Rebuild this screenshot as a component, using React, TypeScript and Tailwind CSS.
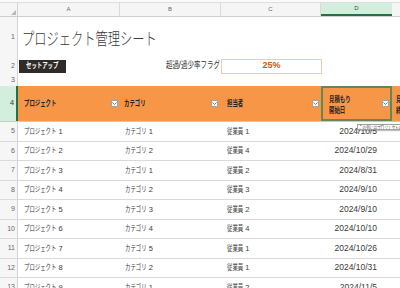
import React from "react";

const SX = 0.72;

// Meiryo UI style narrow kana: CJK runs are squeezed horizontally, latin runs left as is
function Jp({ text, size }: { text: string; size: number }) {
  const runs = text.match(/[\u2e80-\uffef]+|[^\u2e80-\uffef]+/g) ?? [];
  return (
    <span className="whitespace-nowrap">
      {runs.map((r, i) =>
        /[\u2e80-\uffef]/.test(r) ? (
          <span
            key={i}
            className="inline-block origin-left scale-x-[0.72]"
            style={{ marginRight: -(1 - SX) * r.length * size }}
          >
            {r}
          </span>
        ) : (
          <span key={i} className="whitespace-pre">
            {r}
          </span>
        )
      )}
    </span>
  );
}

const ROWS = [
  { n: 5, p: "プロジェクト 1", c: "カテゴリ 1", e: "従業員 1", d: "2024/10/5" },
  { n: 6, p: "プロジェクト 2", c: "カテゴリ 2", e: "従業員 4", d: "2024/10/29" },
  { n: 7, p: "プロジェクト 3", c: "カテゴリ 1", e: "従業員 2", d: "2024/8/31" },
  { n: 8, p: "プロジェクト 4", c: "カテゴリ 2", e: "従業員 3", d: "2024/9/10" },
  { n: 9, p: "プロジェクト 5", c: "カテゴリ 3", e: "従業員 2", d: "2024/9/10" },
  { n: 10, p: "プロジェクト 6", c: "カテゴリ 4", e: "従業員 4", d: "2024/10/10" },
  { n: 11, p: "プロジェクト 7", c: "カテゴリ 5", e: "従業員 1", d: "2024/10/26" },
  { n: 12, p: "プロジェクト 8", c: "カテゴリ 2", e: "従業員 1", d: "2024/10/31" },
  { n: 13, p: "プロジェクト 9", c: "カテゴリ 1", e: "従業員 2", d: "2024/11/5" },
];

function RowNum({ n, className = "" }: { n?: number; className?: string }) {
  return (
    <div
      className={
        "w-[18px] shrink-0 flex items-center justify-end pr-[2px] text-[7px] text-[#666] border-r " +
        (className || "bg-[#f6f6f6] border-[#d4d4d4]")
      }
    >
      {n}
    </div>
  );
}

function Filter() {
  return (
    <div className="w-[7px] h-[7px] shrink-0 bg-white border border-[#a3a3a3] flex items-center justify-center">
      <svg width="5" height="3" viewBox="0 0 5 3">
        <path d="M0.5 0.5 L2.5 2.5 L4.5 0.5" fill="none" stroke="#555" strokeWidth="0.8" />
      </svg>
    </div>
  );
}

export default function App() {
  return (
    <div className="relative w-[400px] h-[288px] overflow-hidden bg-white text-[#333] font-['Liberation_Sans','Noto_Sans_CJK_JP',sans-serif]">
      {/* top strip */}
      <div className="h-[3px] bg-[#fafafa] border-b border-[#dedede]" />

      {/* column letters */}
      <div className="flex h-[14px] bg-[#f5f5f5] border-b border-[#cfcfcf] text-[6px] text-[#666]">
        <div className="w-[18px] shrink-0 flex items-end justify-end pr-[1px] pb-[1px] border-r border-[#d4d4d4]">
          <svg width="5" height="5" viewBox="0 0 5 5">
            <path d="M5 0 L5 5 L0 5 Z" fill="#b9b9b9" />
          </svg>
        </div>
        <div className="w-[102px] shrink-0 flex items-center justify-center border-r border-[#dadada]">A</div>
        <div className="w-[101px] shrink-0 flex items-center justify-center border-r border-[#dadada]">B</div>
        <div className="w-[100px] shrink-0 flex items-center justify-center border-r border-[#dadada]">C</div>
        <div className="w-[71px] shrink-0 flex items-center justify-center bg-[#d3eedd] border-b-2 border-[#217346] text-[#185c37]">
          D
        </div>
        <div className="flex-1" />
      </div>

      {/* row 1: title */}
      <div className="flex h-[40px]">
        <RowNum n={1} />
        <div className="flex-1 pl-[4px] pt-[5px] flex items-center text-[17px] leading-[20px] text-[#3a3a3a] font-light">
          <Jp text="プロジェクト管理シート" size={17} />
        </div>
      </div>

      {/* row 2: setup + flag */}
      <div className="flex h-[18px]">
        <RowNum n={2} />
        <div className="w-[102px] shrink-0 flex items-center">
          <div className="w-[47px] h-[13px] ml-[1px] bg-[#2f2b28] text-white text-[7.5px] font-bold flex items-center justify-center">
            <Jp text="セットアップ" size={7.5} />
          </div>
        </div>
        <div className="w-[101px] shrink-0 flex items-center justify-end pr-[1px] text-[9px] text-[#333]">
          <Jp text="超過" size={9} />
          <span>/</span>
          <Jp text="過少率フラグ" size={9} />
        </div>
        <div className="w-[101px] shrink-0 flex items-center">
          <div className="w-full h-[15px] border border-[#f4c9a8] flex items-center justify-center text-[9px] font-bold text-[#c55a11]">
            25%
          </div>
        </div>
      </div>

      {/* row 3 */}
      <div className="flex h-[11px]">
        <RowNum n={3} />
      </div>

      {/* row 4: table header */}
      <div className="flex h-[36px] border-b border-[#c9c9c9] text-[7.5px] font-bold text-[#222]">
        <RowNum n={4} className="bg-[#d3eedd] border-r-2 border-[#217346] text-[#185c37]" />
        <div className="w-[102px] shrink-0 bg-[#f79646] flex items-center justify-between pl-[6px] pr-[2px]">
          <Jp text="プロジェクト" size={7.5} />
          <Filter />
        </div>
        <div className="w-[101px] shrink-0 bg-[#f79646] flex items-center justify-between pl-[4px] pr-[3px]">
          <Jp text="カテゴリ" size={7.5} />
          <Filter />
        </div>
        <div className="w-[100px] shrink-0 bg-[#f79646] flex items-center justify-between pl-[6px] pr-[2px]">
          <Jp text="担当者" size={7.5} />
          <Filter />
        </div>
        <div className="w-[71px] shrink-0 bg-[#f79646] border-2 border-[#5e8a55] flex items-center justify-between pl-[6px] pr-[1px]">
          <div className="flex flex-col leading-[11px] pt-[2px]">
            <Jp text="見積もり" size={7.5} />
            <Jp text="開始日" size={7.5} />
          </div>
          <Filter />
        </div>
        <div className="flex-1 bg-[#f79646] flex items-center pl-[4px] overflow-hidden">
          <div className="flex flex-col leading-[11px] pt-[2px]">
            <Jp text="見積もり" size={7.5} />
            <Jp text="終了日" size={7.5} />
          </div>
        </div>
      </div>

      {/* data rows */}
      {ROWS.map((r) => (
        <div key={r.n} className="flex h-[19.5px] border-b border-[#dadada] text-[7.5px] text-[#3a3a3a]">
          <RowNum n={r.n} />
          <div className="w-[102px] shrink-0 flex items-center pl-[6px]">
            <Jp text={r.p} size={7.5} />
          </div>
          <div className="w-[101px] shrink-0 flex items-center pl-[5px]">
            <Jp text={r.c} size={7.5} />
          </div>
          <div className="w-[100px] shrink-0 flex items-center pl-[6px]">
            <Jp text={r.e} size={7.5} />
          </div>
          <div className="w-[71px] shrink-0 flex items-center justify-end pr-[15px] text-[8.5px]">{r.d}</div>
          <div className="flex-1" />
        </div>
      ))}

      {/* input message tooltip */}
      <div className="absolute left-[357px] top-[124px] w-[60px] h-[6px] bg-white border border-[#a0a0a0] shadow-[1px_1px_1px_rgba(0,0,0,0.25)] text-[5px] leading-[5px] text-[#444] pl-[1px] overflow-hidden whitespace-nowrap">
        <Jp text="この列にはプロジェクトの見積もり開始日" size={5} />
      </div>
    </div>
  );
}
